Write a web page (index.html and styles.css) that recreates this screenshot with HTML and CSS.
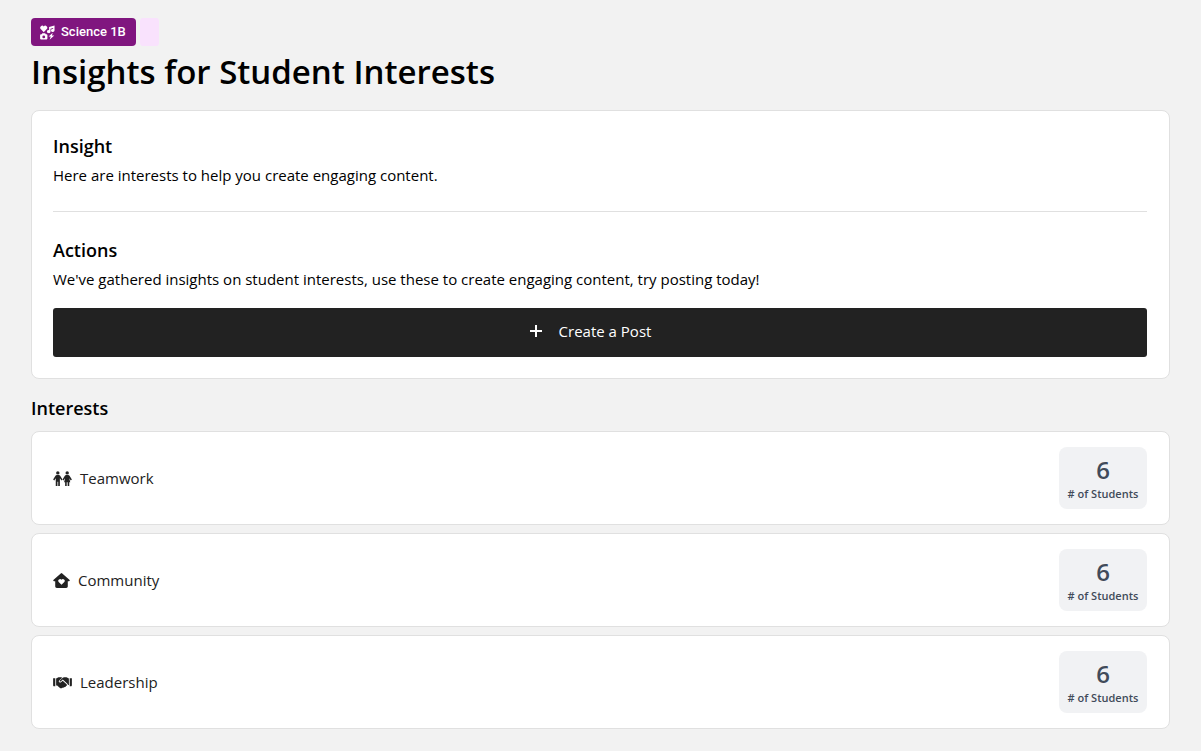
FILE: index.html
```html
<!DOCTYPE html>
<html lang="en">
<head>
    <meta charset="UTF-8">
    <meta name="viewport" content="width=device-width, initial-scale=1.0">
    <title>Insights for Student Interests</title>
    <link rel="stylesheet" href="styles.css">
</head>
<body>
    <main class="page">
        <header>
            <div class="tags">
                <span class="tag">
                    <svg class="tag-icon" viewBox="0 0 16 16" aria-hidden="true">
                        <path d="M4 7.6.8 4.300A1.900 1.900 0 0 1 4 1.500a1.900 1.900 0 0 1 3.200 2.800z"/>
                        <path d="M15.500.5v5.300a1.900 1.600 0 1 1-1.500-1.600V3.300l-2.800.8v3a1.900 1.600 0 1 1-1.500-1.600V2.200z"/>
                        <path fill-rule="evenodd" d="M2.500 8.700h3l.6 1.200h.8c.6 0 1 .4 1 1v3.600c0 .6-.4 1-1 1H1.100c-.6 0-1-.4-1-1v-3.600c0-.6.4-1 1-1h.8zM4 11.200a1.500 1.500 0 1 0 0 3 1.500 1.500 0 0 0 0-3z"/>
                        <path d="M13.600 8.200 9.200 12.200h2.300l-1.300 3.600 5-4.500h-2.500z"/>
                    </svg>
                    Science 1B
                </span>
                <span class="tag-empty"></span>
            </div>
            <h1>Insights for Student Interests</h1>
        </header>

        <section class="card insight-card">
            <h2>Insight</h2>
            <p>Here are interests to help you create engaging content.</p>
            <hr>
            <h2>Actions</h2>
            <p>We've gathered insights on student interests, use these to create engaging content, try posting today!</p>
            <button type="button" class="post-button">
                <svg class="plus-icon" viewBox="0 0 14 14" aria-hidden="true">
                    <path d="M7 1v12M1 7h12"/>
                </svg>
                Create a Post
            </button>
        </section>

        <section class="interests">
            <h2>Interests</h2>
            <ul class="interest-list">
                <li class="card interest">
                    <svg class="icon-wide" viewBox="0 0 20 16" aria-hidden="true">
                        <circle cx="5" cy="2" r="1.8"/>
                        <circle cx="15" cy="2" r="1.8"/>
                        <path d="M3.900 4.300h2.200c.6 0 1.100.3 1.400.8L10 9l-1 1-1.800-2.400V16H5.400v-4.500h-.8V16H2.800V7.700L1.200 10 0 9.100l2.500-4c.3-.5.8-.8 1.400-.8z"/>
                        <path d="M13.900 4.300h2.200c.6 0 1.100.3 1.400.8l2.500 4-1.200.9-1.600-2.300 1.100 4.300h-1.100V16h-1.700v-4h-1v4h-1.700v-4h-1.100l1.100-4.300L11 10l-1-1 2.500-3.900c.3-.5.8-.8 1.400-.8z"/>
                    </svg>
                    <span class="interest-name">Teamwork</span>
                    <div class="count"><strong>6</strong><span># of Students</span></div>
                </li>
                <li class="card interest">
                    <svg class="icon-home" viewBox="0 0 18 16" aria-hidden="true">
                        <path fill-rule="evenodd" d="M8.200.4a1.200 1.200 0 0 1 1.600 0l7.600 6.800c.8.7.4 1.600-.5 1.600h-1.200v5.400c0 1-.7 1.800-1.700 1.800H4c-1 0-1.700-.8-1.700-1.800V8.800H1.100C.2 8.800-.2 7.900.6 7.200zM9 12.600l3-3A1.900 1.900 0 0 0 9 7.100a1.900 1.900 0 0 0-3 2.500z"/>
                    </svg>
                    <span class="interest-name">Community</span>
                    <div class="count"><strong>6</strong><span># of Students</span></div>
                </li>
                <li class="card interest">
                    <svg class="icon-wide" viewBox="0 0 20 16" aria-hidden="true">
                        <path d="M0 3.500h2.300v8.600H1.500C.7 12.100 0 11.600 0 10.800zM20 3.500h-2.300v8.600h.8c.8 0 1.500-.5 1.500-1.300z"/>
                        <path d="M3.200 3.800 5.700 2.300h3l1 .6-3.300 3c-.8.8-.3 2.200.9 2.200.6 0 1-.2 1.400-.6l1.500-1.300 4.100 3.700c.9.9.4 1.800-.5 1.900-.2.900-1 1.300-1.800 1.100-.5.8-1.500 1-2.200.6-.8.8-2 .7-2.800 0l-2.700-2.300H3.200z"/>
                        <path d="M16.800 3.800 14.300 2.300h-2.700c-.5 0-.9.2-1.300.5L7.100 5.900c-.6.600.1 1.500.9.900l2.300-1.900 4.900 4.300c.4.400.6.900.7 1.500h.9z"/>
                    </svg>
                    <span class="interest-name">Leadership</span>
                    <div class="count"><strong>6</strong><span># of Students</span></div>
                </li>
            </ul>
        </section>
    </main>
</body>
</html>
```
FILE: styles.css
```css
* {
    box-sizing: border-box;
}

body {
    margin: 0;
    background-color: #f2f2f2;
    color: #000;
    font-family: "Open Sans", sans-serif;
    font-size: 15px;
    line-height: 24px;
}

h1, h2, p, ul {
    margin: 0;
}

.page {
    padding: 18px 31px 22px;
}

/* Header */
.tags {
    display: flex;
    gap: 4px;
}

.tag {
    display: flex;
    align-items: center;
    gap: 6px;
    height: 28px;
    padding: 0 10px 0 9px;
    border-radius: 4px;
    background-color: #80167f;
    color: #fff;
    font-family: Roboto, sans-serif;
    font-size: 13px;
    font-weight: 500;
}

.tag-icon {
    width: 15px;
    height: 15px;
    fill: currentColor;
}

.tag-empty {
    width: 19px;
    border-radius: 3px;
    background-color: #f9e2fd;
}

h1 {
    margin-bottom: 12px;
    font-size: 33px;
    font-weight: 600;
    line-height: 52px;
}

h2 {
    font-size: 18px;
    font-weight: 600;
    line-height: 28px;
}

/* Cards */
.card {
    border: 1px solid #e0e0e0;
    border-radius: 8px;
    background-color: #fff;
}

.insight-card {
    padding: 21px 22px 21px 21px;
}

.insight-card p {
    margin-top: 3px;
}

hr {
    height: 1px;
    margin: 24px 0;
    border: none;
    background-color: #e0e0e0;
}

.post-button {
    display: flex;
    align-items: center;
    justify-content: center;
    gap: 16px;
    width: 100%;
    height: 49px;
    margin-top: 17px;
    padding: 0 20px 3px 0;
    border: none;
    border-radius: 3px;
    background-color: #222;
    color: #fff;
    font-family: inherit;
    font-size: 15px;
    cursor: pointer;
}

.plus-icon {
    width: 14px;
    height: 14px;
    fill: none;
    stroke: currentColor;
    stroke-width: 2;
}

/* Interests */
.interests {
    margin-top: 15px;
}

.interest-list {
    display: flex;
    flex-direction: column;
    gap: 8px;
    margin-top: 9px;
    padding: 0;
    list-style: none;
}

.interest {
    display: flex;
    align-items: center;
    padding: 15px 22px 15px 21px;
    color: #222;
}

.icon-wide,
.icon-home {
    height: 15px;
    fill: #222;
}

.icon-wide {
    width: 19px;
}

.icon-home {
    width: 17px;
}

.interest-name {
    flex: 1;
    margin-left: 8px;
}

.count {
    display: flex;
    flex-direction: column;
    align-items: center;
    width: 88px;
    height: 62px;
    padding-top: 7px;
    border-radius: 8px;
    background-color: #f1f2f4;
    color: #414b5a;
}

.count strong {
    font-size: 24px;
    font-weight: 600;
    line-height: 32px;
}

.count span {
    font-size: 11px;
    font-weight: 600;
    line-height: 16px;
}
```
